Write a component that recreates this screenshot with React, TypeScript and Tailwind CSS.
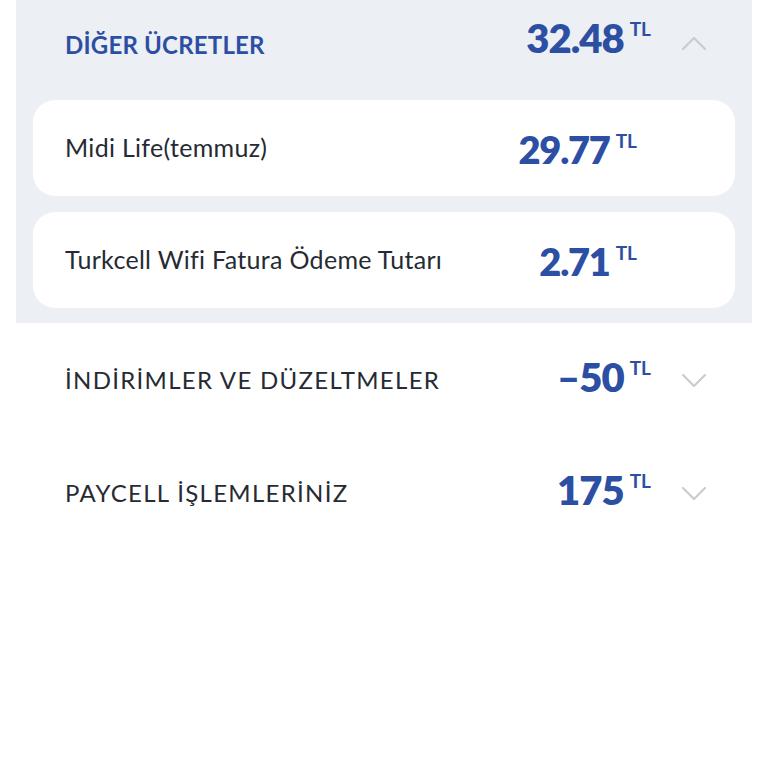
import React from 'react';

const font = { fontFamily: 'Lato, "Noto Sans", sans-serif' };

const Chevron = ({ up }: { up?: boolean }) => (
  <svg width="26" height="16" viewBox="0 0 26 16" className="text-[#c9ccd1]">
    <path
      d={up ? 'M2 14 L13 3 L24 14' : 'M2 3 L13 14 L24 3'}
      fill="none"
      stroke="currentColor"
      strokeWidth="2.2"
      strokeLinecap="round"
      strokeLinejoin="round"
    />
  </svg>
);

const Amount = ({ value, small }: { value: string; small?: boolean }) => (
  <div className="flex items-start text-[#2c4ea3]">
    <span
      className={
        small
          ? 'text-[38px] font-extrabold leading-none tracking-[-1.2px]'
          : 'text-[40px] font-extrabold leading-none tracking-[-1px]'
      }
    >
      {value}
    </span>
    <span className="ml-[6px] mt-[1px] text-[19px] font-bold leading-none">TL</span>
  </div>
);

const items = [
  { name: 'Midi Life(temmuz)', amount: '29.77' },
  { name: 'Turkcell Wifi Fatura Ödeme Tutarı', amount: '2.71' },
];

const sections = [
  { title: 'İNDİRİMLER VE DÜZELTMELER', amount: '–50' },
  { title: 'PAYCELL İŞLEMLERİNİZ', amount: '175' },
];

export default function App() {
  return (
    <div className="h-[768px] w-[768px] bg-white" style={font}>
      <div className="mx-4 bg-[#eceff3] pb-[15px]">
        <div className="flex h-[100px] items-center pl-[49px] pr-[45px]">
          <span className="-mt-[10px] flex-1 text-[24px] font-bold tracking-[0.2px] text-[#2c4ea3]">DİĞER ÜCRETLER</span>
          <div className="-mt-[24px]">
            <Amount value="32.48" />
          </div>
          <div className="ml-[30px] -mt-[14px]">
            <Chevron up />
          </div>
        </div>
        <div className="flex flex-col gap-4 px-[17px]">
          {items.map((it) => (
            <div key={it.name} className="flex h-[96px] items-center rounded-[22px] bg-white pl-[32px] pr-[98px]">
              <span className="flex-1 text-[25px] tracking-[0.3px] text-[#262b33]">{it.name}</span>
              <div className="mt-[1px]">
                <Amount value={it.amount} small />
              </div>
            </div>
          ))}
        </div>
      </div>
      {sections.map((s) => (
        <div key={s.title} className="mx-4 flex h-[113px] items-center pl-[49px] pr-[45px]">
          <span className="flex-1 text-[24px] tracking-[1.3px] text-[#262b33]">{s.title}</span>
          <div className="-mt-[6px]">
            <Amount value={s.amount} />
          </div>
          <div className="ml-[30px]">
            <Chevron />
          </div>
        </div>
      ))}
    </div>
  );
}
